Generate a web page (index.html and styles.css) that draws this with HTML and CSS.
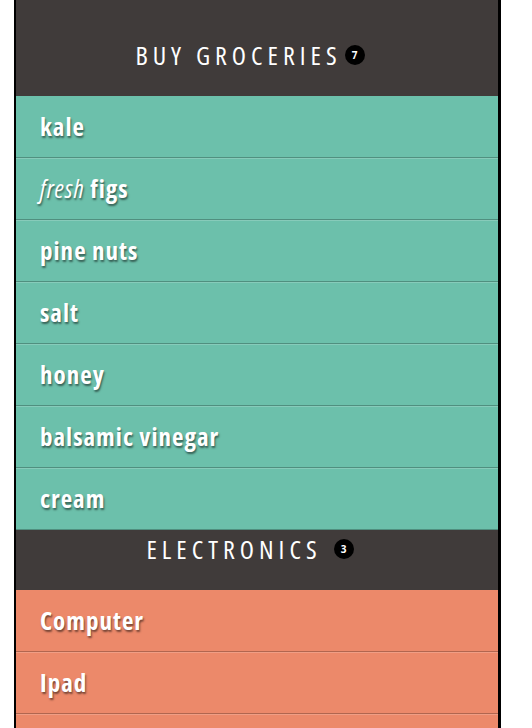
FILE: index.html
```html
<!DOCTYPE html>
<html>
<head>
<meta charset="utf-8">
<link rel="stylesheet" href="styles.css">
</head>
<body>
<div class="app">
  <section class="list list-groceries">
    <h2 class="list-header list-header-first"><span class="title">Buy Groceries</span><span class="badge">7</span></h2>
    <ul class="items">
      <li class="item">kale</li>
      <li class="item"><em>fresh</em> figs</li>
      <li class="item">pine nuts</li>
      <li class="item">salt</li>
      <li class="item">honey</li>
      <li class="item">balsamic vinegar</li>
      <li class="item">cream</li>
    </ul>
  </section>
  <section class="list list-electronics">
    <h2 class="list-header"><span class="title title-spaced">Electronics</span><span class="badge">3</span></h2>
    <ul class="items">
      <li class="item">Computer</li>
      <li class="item">Ipad</li>
      <li class="item">Headphones</li>
    </ul>
  </section>
</div>
</body>
</html>
```
FILE: styles.css
```css
html, body {
  margin: 0;
  padding: 0;
  background: #ffffff;
}
body {
  font-family: "Open Sans", sans-serif;
}
.app {
  width: 482px;
  margin-left: 14px;
  border-left: 2px solid #000;
  border-right: 3px solid #000;
  min-height: 728px;
  background: #403b3a;
}
.list-header {
  margin: 0;
  background: #403b3a;
  color: #ffffff;
  font-family: "Open Sans", sans-serif;
  font-stretch: 75%;
  font-weight: 500;
  font-size: 26px;
  line-height: 28px;
  letter-spacing: 5px;
  text-transform: uppercase;
  padding: 5px 14px 27px 0;
  display: flex;
  justify-content: center;
  align-items: center;
}
.list-header-first {
  padding-top: 41px;
}
.title-spaced {
  margin-right: 9px;
}
.badge {
  display: inline-flex;
  justify-content: center;
  align-items: center;
  width: 20px;
  height: 20px;
  border-radius: 50%;
  background: #000;
  color: #fff;
  font-family: "Open Sans", sans-serif;
  font-stretch: 100%;
  font-size: 10px;
  font-weight: bold;
  letter-spacing: 0;
  margin-left: 3px;
}
.items {
  list-style: none;
  margin: 0;
  padding: 0;
}
.item {
  height: 60px;
  line-height: 58px;
  padding-left: 24px;
  color: #ffffff;
  font-family: "Open Sans", sans-serif;
  font-stretch: 75%;
  font-size: 25px;
  letter-spacing: 1px;
  font-weight: bold;
  text-shadow: 1px 2px 2px rgba(0, 0, 0, 0.5);
  border-top: 1px solid rgba(255, 255, 255, 0.18);
  border-bottom: 1px solid rgba(0, 0, 0, 0.25);
}
.item em {
  font-style: italic;
  font-weight: normal;
}
.list-groceries .item {
  background: #6cc0ab;
}
.list-groceries .item:first-child {
  border-top-color: #6cc0ab;
}
.list-electronics .item {
  background: #ec896a;
}
.list-electronics .item:first-child {
  border-top-color: #ec896a;
}
```
